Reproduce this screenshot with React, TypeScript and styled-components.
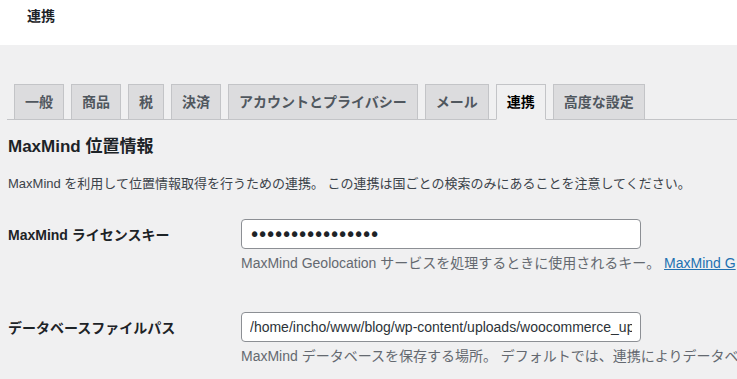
import React from "react";
import styled, { createGlobalStyle } from "styled-components";

const FONT = `"Liberation Sans", "Noto Sans CJK JP", sans-serif`;

const GlobalStyle = createGlobalStyle`
  html, body {
    margin: 0;
    padding: 0;
    overflow: hidden;
    background: #f0f0f1;
  }
  body {
    font-family: ${FONT};
    color: #3c434a;
    font-size: 13px;
  }
`;

const Page = styled.div`
  width: 737px;
  height: 379px;
  overflow: hidden;
  background: #f0f0f1;
`;

const TopBar = styled.header`
  height: 45px;
  background: #ffffff;
  padding: 6px 0 0 27px;
  box-sizing: border-box;
`;

const TopTitle = styled.h1`
  margin: 0;
  font-size: 14px;
  line-height: 20px;
  font-weight: 600;
  color: #1d2327;
`;

const Main = styled.main`
  padding: 39px 0 0 7px;
`;

const TabNav = styled.nav`
  display: flex;
  align-items: flex-end;
  border-bottom: 1px solid #c3c4c7;
`;

const Tab = styled.a<{ $active?: boolean }>`
  display: block;
  margin-left: 7px;
  padding: 5px 10px;
  border: 1px solid #c3c4c7;
  border-bottom: ${(p) => (p.$active ? "1px solid #f0f0f1" : "none")};
  margin-bottom: ${(p) => (p.$active ? "-1px" : "0")};
  font-size: 14px;
  line-height: 24px;
  font-weight: 600;
  white-space: nowrap;
  text-decoration: none;
  background: ${(p) => (p.$active ? "#f0f0f1" : "#dcdcde")};
  color: ${(p) => (p.$active ? "#000000" : "#50575e")};
`;

const Content = styled.section`
  padding-left: 1px;
`;

const Heading = styled.h2`
  margin: 17px 0 0;
  font-size: 17px;
  line-height: 20px;
  font-weight: 600;
  color: #1d2327;
`;

const Intro = styled.p`
  margin: 17px 0 0;
  font-size: 13px;
  line-height: 20px;
  white-space: nowrap;
  color: #3c434a;
`;

const FormTable = styled.div<{ $top: number }>`
  display: grid;
  grid-template-columns: 233px 1fr;
  row-gap: 38px;
  margin-top: ${(p) => p.$top}px;
`;

const Label = styled.label`
  height: 30px;
  display: flex;
  align-items: center;
  font-size: 14px;
  font-weight: 600;
  color: #1d2327;
  white-space: nowrap;
`;

const Field = styled.div`
  display: flex;
  flex-direction: column;
  min-width: 0;
`;

const TextInput = styled.input`
  box-sizing: border-box;
  width: 400px;
  height: 30px;
  margin: 0;
  padding: 0 8px;
  border: 1px solid #8c8f94;
  border-radius: 4px;
  background: #ffffff;
  color: #2c3338;
  font-family: ${FONT};
  font-size: 14px;
  outline: none;
`;

const PasswordInput = styled(TextInput)`
  font-family: "DejaVu Sans", sans-serif;
  font-size: 19px;
  letter-spacing: -3.2px;
  padding-left: 7px;
  color: #1d2327;
`;

const Description = styled.p`
  margin: 4px 0 0;
  font-size: 14px;
  line-height: 21px;
  color: #646970;
  white-space: nowrap;
  overflow: hidden;
`;

const DocLink = styled.a`
  color: #2271b1;
  text-decoration: underline;
`;

const tabs = [
  "一般",
  "商品",
  "税",
  "決済",
  "アカウントとプライバシー",
  "メール",
  "連携",
  "高度な設定",
];

export default function App() {
  return (
    <Page>
      <GlobalStyle />
      <TopBar>
        <TopTitle>連携</TopTitle>
      </TopBar>
      <Main>
        <TabNav>
          {tabs.map((t) => (
            <Tab key={t} $active={t === "連携"} href="#">
              {t}
            </Tab>
          ))}
        </TabNav>
        <Content>
          <Heading>MaxMind 位置情報</Heading>
          <Intro>
            MaxMind を利用して位置情報取得を行うための連携。 この連携は国ごとの検索のみにあることを注意してください。
          </Intro>
          <FormTable $top={25}>
            <Label htmlFor="license">MaxMind ライセンスキー</Label>
            <Field>
              <PasswordInput
                id="license"
                type="password"
                defaultValue="abcdefghijklmnop"
              />
              <Description>
                MaxMind Geolocation サービスを処理するときに使用されるキー。{" "}
                <DocLink href="#">MaxMind G</DocLink>
              </Description>
            </Field>
            <Label htmlFor="dbpath">データベースファイルパス</Label>
            <Field>
              <TextInput
                id="dbpath"
                type="text"
                readOnly
                defaultValue="/home/incho/www/blog/wp-content/uploads/woocommerce_uploads/GeoLite2-Country.mmdb"
              />
              <Description>
                MaxMind データベースを保存する場所。 デフォルトでは、連携によりデータベ
              </Description>
            </Field>
          </FormTable>
        </Content>
      </Main>
    </Page>
  );
}
